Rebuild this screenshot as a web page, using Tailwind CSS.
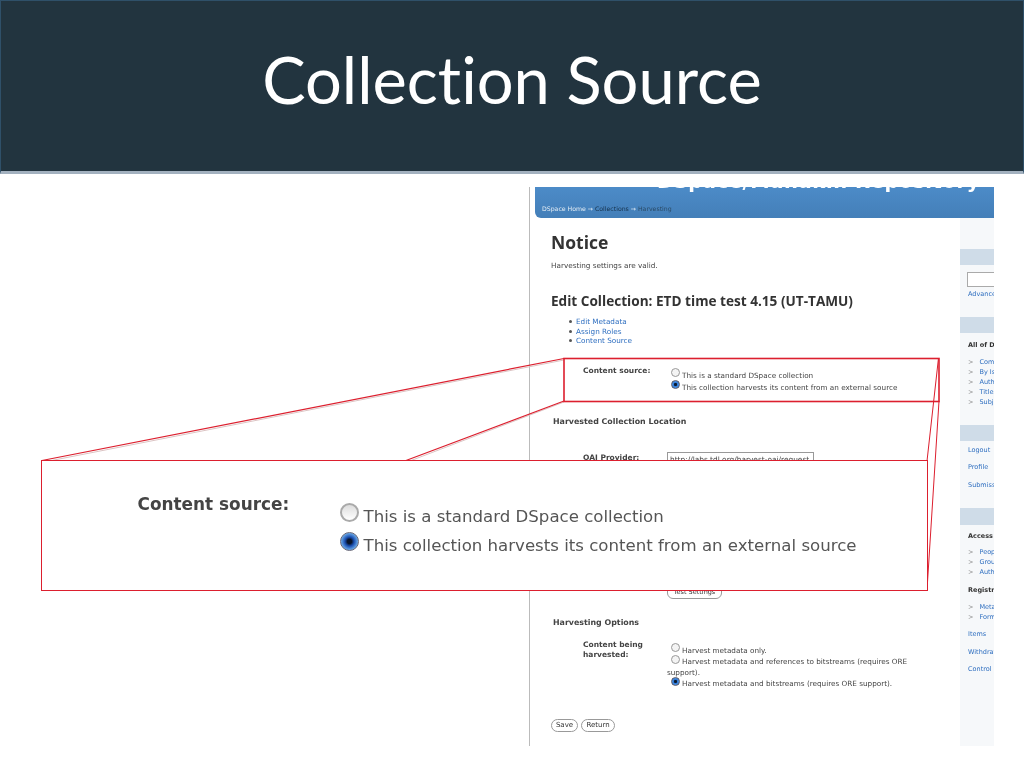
<!DOCTYPE html>
<html><head><meta charset="utf-8"><script src="https://cdn.jsdelivr.net/npm/@tailwindcss/browser@4"></script></head>
<body class="bg-white">
<div class="relative w-[1024px] h-[768px] overflow-hidden bg-white font-['DejaVu_Sans',sans-serif]">
<header class="h-[174px] bg-[#22343f] border border-[#2f5069] border-b-[3px] border-b-[#a3b1bf] flex justify-center">
<h1 class="font-['Lato',sans-serif] [font-variant-ligatures:none] text-white text-[65px] leading-[156px]">Collection Source</h1>
</header>
<div class="ml-[529px] mt-[13px] w-[465px] h-[559px] border-l border-[#bbb] pl-[5px] text-[#444] blur-[0.4px]">
<div class="h-[31px] bg-gradient-to-b from-[#4c8bc8] to-[#447fb8] rounded-bl-[6px] relative overflow-hidden text-[6.2px] whitespace-nowrap">
<div class="text-right pr-[14px] -mt-[18px] text-white text-[19.5px] leading-[25px] font-bold tracking-[0.6px]">DSpace/Manakin Repository</div>
<div class="pl-[7px] mt-[11px] text-[#e4edf5] leading-[8px]">DSpace Home → <span class="text-[#16324d]">Collections</span> → <span class="text-[#2a4a66]">Harvesting</span></div>
</div>
<div class="flex">
<main class="w-[425px] pl-[16px] text-[7.25px] text-[#444]">
<h2 class="mt-[11px] font-['Open_Sans',sans-serif] text-[17.5px] leading-[26px] font-bold text-[#333]">Notice</h2>
<p class="mt-[6px] leading-[10px]">Harvesting settings are valid.</p>
<h2 class="mt-[20px] font-['Open_Sans',sans-serif] text-[13.6px] leading-[20px] font-bold text-[#333]">Edit Collection: ETD time test 4.15 (UT-TAMU)</h2>
<ul class="mt-[6px] pl-[18px] leading-[9.5px] text-[#2f6fc0]">
<li class="flex items-center gap-[4px]"><span class="w-[3px] h-[3px] rounded-full bg-[#555]"></span>Edit Metadata</li>
<li class="flex items-center gap-[4px]"><span class="w-[3px] h-[3px] rounded-full bg-[#555]"></span>Assign Roles</li>
<li class="flex items-center gap-[4px]"><span class="w-[3px] h-[3px] rounded-full bg-[#555]"></span>Content Source</li>
</ul>
<div class="mt-[20px] pl-[32px] flex">
<div class="w-[84px] font-bold text-[7.5px] leading-[10px]">Content source:</div>
<div class="leading-[12.5px] mt-[4px]">
<div class="flex items-center pl-[4px] gap-[2px]"><span class="w-[9px] h-[9px] rounded-full border border-[#999] bg-[#f4f4f4] -mt-[7px]"></span>This is a standard DSpace collection</div>
<div class="flex items-center pl-[4px] gap-[2px]"><span class="w-[9px] h-[9px] rounded-full border border-[#556] bg-[radial-gradient(circle,#0a1a30_25%,#2d78d8_40%,#6fb0ee_100%)] -mt-[7px]"></span>This collection harvests its content from an external source</div>
</div>
</div>
<h3 class="mt-[21px] pl-[2px] text-[7.9px] leading-[12px] font-bold">Harvested Collection Location</h3>
<div class="mt-[25px] pl-[32px] flex h-[131px]">
<div class="w-[84px] font-bold text-[7.5px] leading-[10px]">OAI Provider:</div>
<div class="w-[147px] h-[14px] border border-[#999] text-[7.4px] pl-[2px] leading-[14px] -mt-[1px] overflow-hidden whitespace-nowrap">http://labs.tdl.org/harvest-oai/request</div>
</div>
<div class="pl-[116px] h-[15px]"><button class="w-[55px] h-[15px] border-[1.5px] border-[#999] rounded-[6px] text-[6.5px] leading-[15px] text-[#333] whitespace-nowrap">Test Settings</button></div>
<h3 class="mt-[18px] pl-[2px] text-[7.9px] leading-[12px] font-bold">Harvesting Options</h3>
<div class="mt-[11px] pl-[32px] flex">
<div class="w-[84px] font-bold leading-[10px] text-[7.5px]">Content being harvested:</div>
<div class="leading-[11.5px] mt-[5px]">
<div class="flex items-center pl-[4px] gap-[2px]"><span class="w-[9px] h-[9px] rounded-full border border-[#999] bg-[#f4f4f4] -mt-[5px]"></span>Harvest metadata only.</div>
<div class="flex items-center pl-[4px] gap-[2px]"><span class="w-[9px] h-[9px] rounded-full border border-[#999] bg-[#f4f4f4] -mt-[5px]"></span>Harvest metadata and references to bitstreams (requires ORE</div>
<div class="-mt-[1px]">support).</div>
<div class="flex items-center pl-[4px] gap-[2px]"><span class="w-[9px] h-[9px] rounded-full border border-[#556] bg-[radial-gradient(circle,#0a1a30_25%,#2d78d8_40%,#6fb0ee_100%)] -mt-[5px]"></span>Harvest metadata and bitstreams (requires ORE support).</div>
</div>
</div>
<div class="mt-[29px] flex gap-[3px] text-[7px] text-[#333]">
<button class="w-[27px] h-[13px] border-[1.5px] border-[#999] rounded-[7px] leading-[10px]">Save</button>
<button class="w-[34px] h-[13px] border-[1.5px] border-[#999] rounded-[7px] leading-[10px]">Return</button>
</div>
</main>
<aside class="w-[34px] h-[528px] ml-auto bg-[#f6f8fa] overflow-hidden whitespace-nowrap text-[6.5px] text-[#2f6fc0]">
<div class="mt-[31px] h-[16px] bg-[#cfdce8]"></div>
<div class="mt-[7px] ml-[7px] h-[15px] border border-[#aaa] border-r-0 bg-white"></div>
<div class="mt-[2px] ml-[8px] leading-[10px]">Advanced Search</div>
<div class="mt-[18px] h-[16px] bg-[#cfdce8]"></div>
<div class="mt-[7px] ml-[8px] leading-[10px] font-bold text-[#333]">All of DSpace</div>
<ul class="mt-[7px] ml-[8px] leading-[10px]">
<li><span class="text-[#888] mr-[6px]">&gt;</span>Communities</li><li><span class="text-[#888] mr-[6px]">&gt;</span>By Issue Date</li><li><span class="text-[#888] mr-[6px]">&gt;</span>Authors</li><li><span class="text-[#888] mr-[6px]">&gt;</span>Titles</li><li><span class="text-[#888] mr-[6px]">&gt;</span>Subjects</li>
</ul>
<div class="mt-[18px] h-[16px] bg-[#cfdce8]"></div>
<div class="mt-[4px] ml-[8px] leading-[10px]">Logout</div>
<div class="mt-[7px] ml-[8px] leading-[10px]">Profile</div>
<div class="mt-[8px] ml-[8px] leading-[10px]">Submissions</div>
<div class="mt-[18px] h-[17px] bg-[#cfdce8]"></div>
<div class="mt-[6px] ml-[8px] leading-[10px] font-bold text-[#333]">Access Control</div>
<ul class="mt-[6px] ml-[8px] leading-[10px]">
<li><span class="text-[#888] mr-[6px]">&gt;</span>People</li><li><span class="text-[#888] mr-[6px]">&gt;</span>Groups</li><li><span class="text-[#888] mr-[6px]">&gt;</span>Authorizations</li>
</ul>
<div class="mt-[8px] ml-[8px] leading-[10px] font-bold text-[#333]">Registries</div>
<ul class="mt-[7px] ml-[8px] leading-[10px]">
<li><span class="text-[#888] mr-[6px]">&gt;</span>Metadata</li><li><span class="text-[#888] mr-[6px]">&gt;</span>Format</li>
</ul>
<div class="mt-[7px] ml-[8px] leading-[10px]">Items</div>
<div class="mt-[8px] ml-[8px] leading-[10px]">Withdrawn</div>
<div class="mt-[7px] ml-[8px] leading-[10px]">Control Panel</div>
</aside>
</div>
</div>
<svg class="absolute left-0 top-0 w-[1024px] h-[768px] pointer-events-none" viewBox="0 0 1024 768" fill="none">
<g stroke-width="1">
<path stroke="#dcc4c4" d="M44 462 L564 360 M402 464 L564 402"/>
<path stroke="#dc1f2e" stroke-width="1.2" d="M42 460.5 L564 358.5 M402 462 L564 401"/>
<path stroke="#dc1f2e" d="M927 461 L938.5 358 M927 590 L939 401"/>
<rect stroke="#dc1f2e" x="564" y="358.5" width="375" height="43" stroke-width="1.6"/>
</g>
</svg>
<section class="absolute left-[41px] top-[460px] w-[887px] h-[131px] bg-white border-[1.5px] border-[#dc1f2e] text-[#444] blur-[0.35px]">
<div class="flex pl-[95.5px] pt-[30.5px]">
<div class="w-[202px] font-bold text-[16.9px] leading-[24px]">Content source:</div>
<div class="mt-[11.5px] text-[16.6px] leading-[28.5px] text-[#555]">
<div class="flex items-center gap-[5px]"><span class="w-[19px] h-[19px] rounded-full border-[2px] border-[#aaa] bg-gradient-to-b from-[#ddd] to-white -mt-[9px]"></span>This is a standard DSpace collection</div>
<div class="flex items-center gap-[5px]"><span class="w-[19px] h-[19px] rounded-full border border-[#667] bg-[radial-gradient(circle,#08142a_18%,#1a4fb0_38%,#7fc0f5_78%,#3a70b8_100%)] -mt-[9px]"></span>This collection harvests its content from an external source</div>
</div>
</div>
</section>
</div>
</body></html>
